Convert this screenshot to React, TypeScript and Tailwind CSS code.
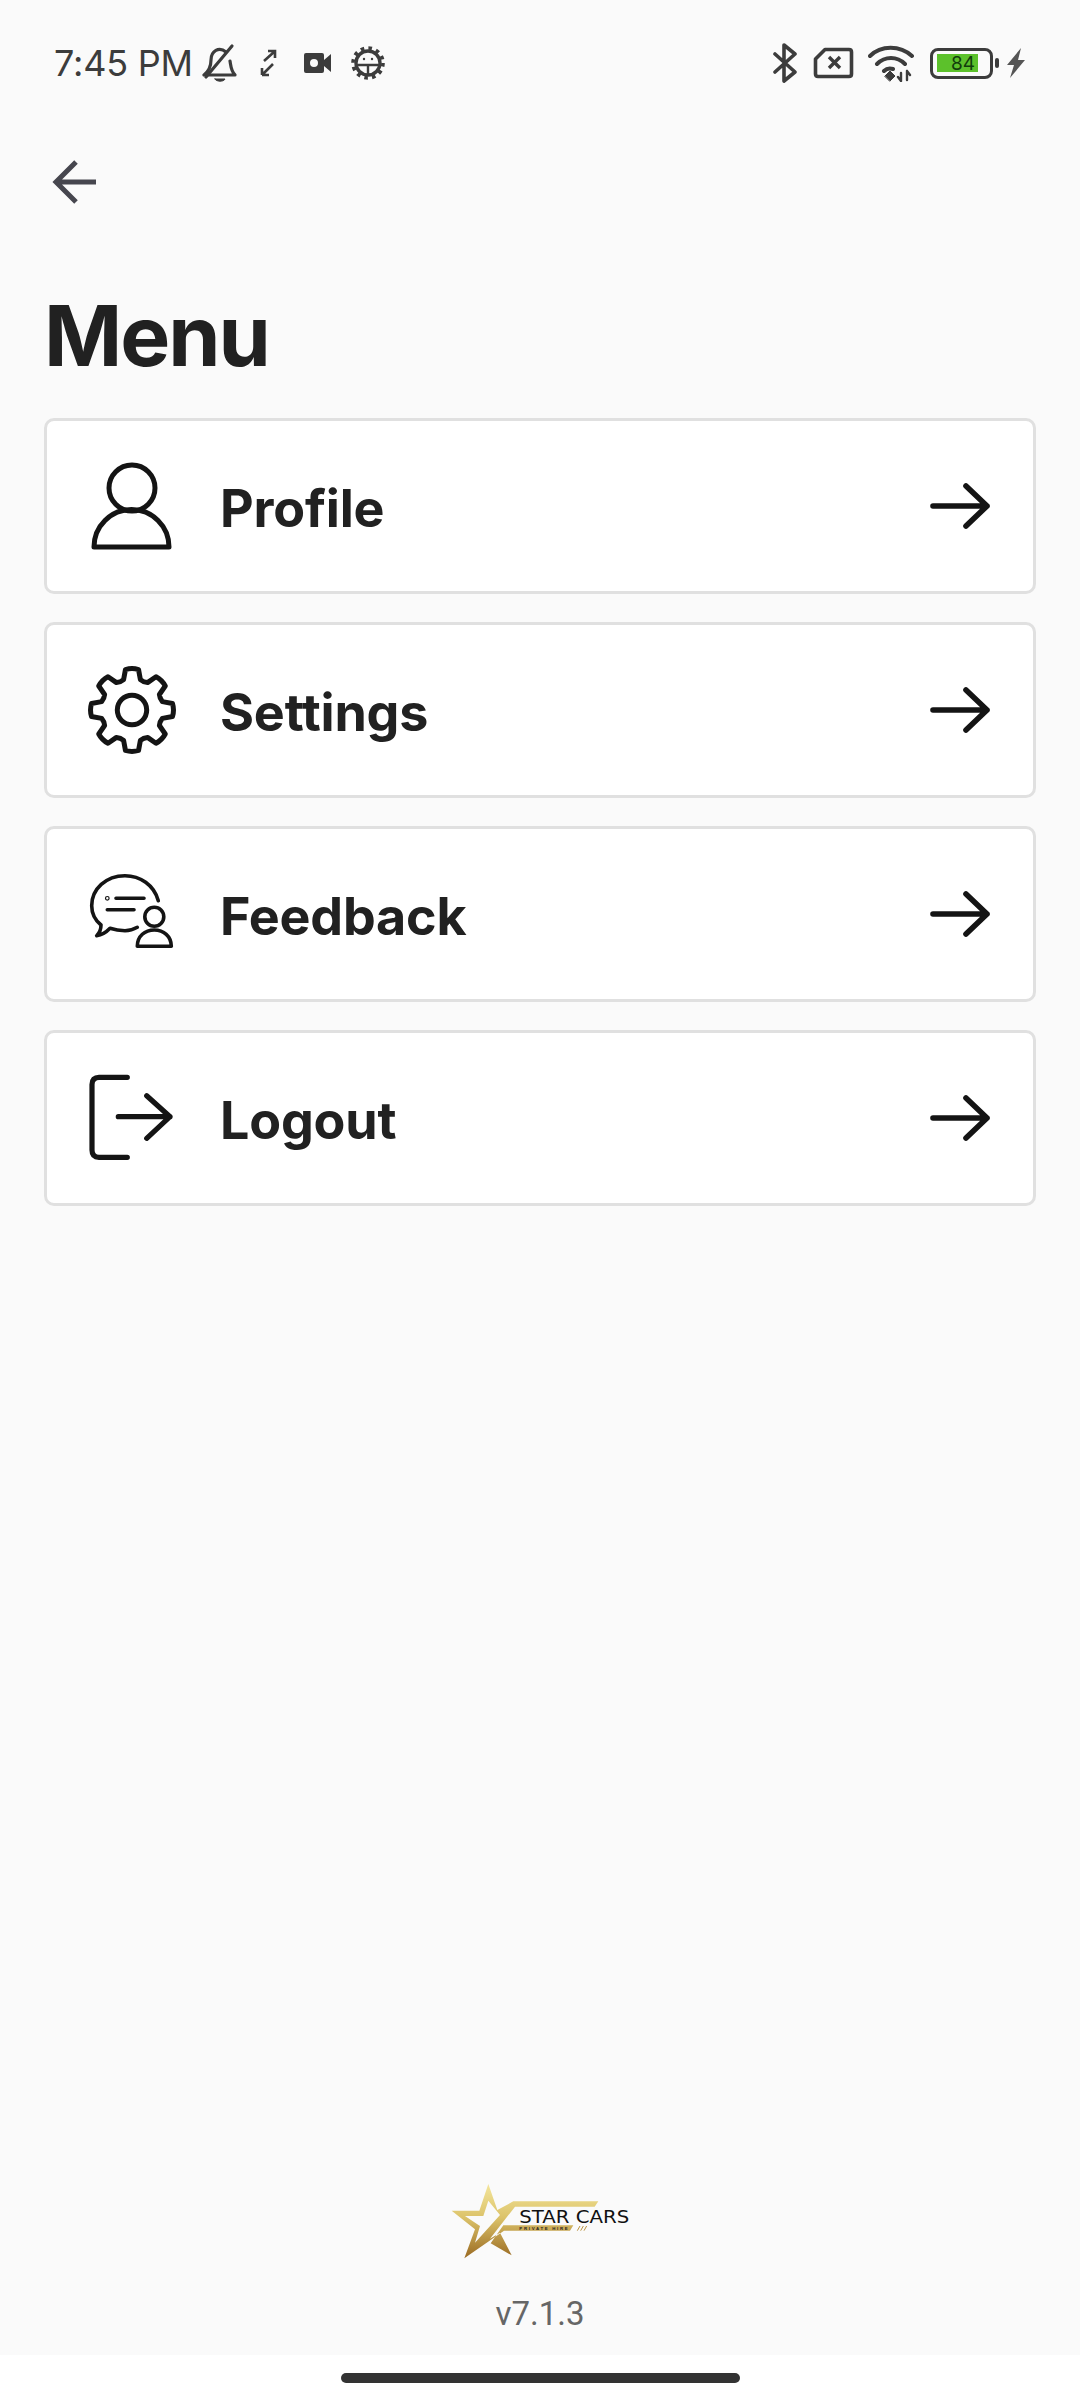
import { ReactNode } from 'react';

// 8-tooth gear outline, centred on 44,44 in an 88 box
const gearPath = () => {
    const pt = (r: number, a: number) => `${(44 + r * Math.sin(a)).toFixed(2)} ${(44 - r * Math.cos(a)).toFixed(2)}`;
    let d = '';
    for (let i = 0; i < 8; i++) {
        const a = (i * Math.PI) / 4;
        const next = a + Math.PI / 4;
        d += `${i === 0 ? 'M' : 'L'}${pt(31.5, a - 0.27)} L${pt(41, a - 0.16)} Q${pt(42.5, a)} ${pt(41, a + 0.16)} L${pt(31.5, a + 0.27)} Q${pt(30, a + Math.PI / 8)} ${pt(31.5, next - 0.27)} `;
    }
    return d + 'Z';
};

const ProfileIcon = () => (
    <svg width="88" height="88" viewBox="0 0 88 88" fill="none" stroke="#141414" strokeWidth="5" strokeLinejoin="round">
        <circle cx="44" cy="26" r="23" />
        <path d="M6 85 A37.5 37.5 0 0 1 81 85 Z" />
    </svg>
);

const SettingsIcon = () => (
    <svg width="88" height="88" viewBox="0 0 88 88" fill="none" stroke="#141414" strokeWidth="5" strokeLinejoin="round">
        <path d={gearPath()} />
        <circle cx="44" cy="44" r="14.7" />
    </svg>
);

const FeedbackIcon = () => (
    <svg width="88" height="88" viewBox="0 0 88 88" fill="none" stroke="#141414" strokeWidth="3.6" strokeLinecap="round" strokeLinejoin="round">
        <path d="M70.3 30.7 C66 15 52 5.7 37 5.7 C18 5.7 3.7 19 3.7 35.7 C3.7 44 7 50 13 55 C13 59 11.5 63 8.7 65.7 C14 65 18.5 62 22 58.3 C27 60 32 60.7 37 60.7 C41 60.7 45.5 59.5 49.3 57.3" />
        <path d="M28 28.3 H56 M19.3 39.7 H46" />
        <circle cx="19.3" cy="28.3" r="0.6" />
        <circle cx="66.3" cy="46.7" r="9.5" />
        <path d="M49.3 76.3 C49.3 66 57 60 66.3 60 C75.5 60 83.3 66 83.3 76.3 Z" />
    </svg>
);

const LogoutIcon = () => (
    <svg width="88" height="88" viewBox="0 0 88 88" fill="none" stroke="#141414" strokeWidth="5.2" strokeLinecap="round" strokeLinejoin="round">
        <path d="M39.3 3.3 H11 Q4 3.3 4 10.5 V76 Q4 83.3 11 83.3 H39.3" />
        <path d="M30.3 42.7 H82 M58.7 21.7 L82 42.7 L58.7 64.3" />
    </svg>
);

const ForwardArrow = () => (
    <svg width="60" height="48" viewBox="0 0 60 48" fill="none" stroke="#141414" strokeWidth="5.6" strokeLinecap="round" strokeLinejoin="round">
        <path d="M3 24 H57 M36 4 L57 24 L36 44" />
    </svg>
);

const StarCarsLogo = () => (
    <svg width="240" height="130" viewBox="0 0 720 390">
        <defs>
            <linearGradient id="gold" x1="0" y1="0" x2="0" y2="1">
                <stop offset="0" stopColor="#f3e59b" />
                <stop offset="0.45" stopColor="#dcc36a" />
                <stop offset="1" stopColor="#9a6a22" />
            </linearGradient>
        </defs>
        <path
            fill="url(#gold)"
            fillRule="evenodd"
            d="M205 72 L232 150 L280 124 H535 L524 140 H285 L210 236 L240 218 L275 286 L212 250 L250 196 H460 L450 212 H252 L133 295 L165 208 L95 152 H178 Z M205 122 L190 168 H135 L180 198 L165 248 L240 165 Z"
        />
        <text x="298" y="190" fontFamily="'DejaVu Sans', sans-serif" fontSize="52" fill="#111" textLength="330" lengthAdjust="spacingAndGlyphs">
            STAR CARS
        </text>
        <text x="298" y="210" fontFamily="'Liberation Sans', sans-serif" fontSize="13" fontWeight="700" fill="#222" textLength="145" lengthAdjust="spacing">
            PRIVATE HIRE
        </text>
        <path d="M472 212 L480 198 M482 212 L490 198 M492 212 L500 198" stroke="#b8923f" strokeWidth="3" />
    </svg>
);

const StatusLeft = () => (
    <div className="flex items-center">
        <span className="text-[36px] leading-none text-[#3c3c3c] tracking-[-0.2px]">7:45 PM</span>
        <svg className="ml-[9px]" width="36" height="40" viewBox="0 0 36 40" fill="none" stroke="#3c3c3c" strokeWidth="3.2" strokeLinecap="round" strokeLinejoin="round">
            <path d="M2 32 H33 C29 28 29 24 28 18 M24 9 C17 3 9 8 9 17 C9 24 7 28 2 32" />
            <path d="M4 34 L30 3" />
            <path d="M13 36 H23 C22 39 14 39 13 36 Z" fill="#3c3c3c" strokeWidth="1" />
        </svg>
        <svg className="ml-[21px]" width="18" height="28" viewBox="0 0 18 28" fill="none" stroke="#3c3c3c" strokeWidth="2.6">
            <path d="M9 2 H16 V9 M15 3 L5 12 M3 26 V19 M3 26 H10 M4 25 L14 15" />
        </svg>
        <svg className="ml-[27px]" width="28" height="20" viewBox="0 0 28 20">
            <path fillRule="evenodd" fill="#3c3c3c" d="M2 0 H18 Q20 0 20 2 V7 L27 1 V19 L20 13 V18 Q20 20 18 20 H2 Q0 20 0 18 V2 Q0 0 2 0 Z M10 6 A4 4 0 1 0 10 14 A4 4 0 1 0 10 6 Z" />
        </svg>
        <svg className="ml-[19px]" width="34" height="34" viewBox="0 0 34 34" fill="none" stroke="#3c3c3c">
            <circle cx="17" cy="17" r="12" strokeWidth="3.4" />
            <circle cx="17" cy="17" r="15" strokeWidth="3.6" strokeDasharray="3.6 4.25" />
            <path d="M7 19 H27 M17 19 V28" strokeWidth="2.4" />
            <circle cx="13" cy="13" r="1.2" fill="#3c3c3c" strokeWidth="0" />
            <circle cx="21" cy="13" r="1.2" fill="#3c3c3c" strokeWidth="0" />
        </svg>
    </div>
);

const StatusRight = () => (
    <div className="flex items-center">
        <svg width="26" height="40" viewBox="0 0 26 40" fill="none" stroke="#3c3c3c" strokeWidth="3.6" strokeLinecap="round" strokeLinejoin="round">
            <path d="M3 11 L23 29 L12 38 V2 L23 11 L3 29" />
        </svg>
        <svg className="ml-[15px]" width="41" height="32" viewBox="0 0 41 32" fill="none" stroke="#3c3c3c" strokeLinejoin="round">
            <path d="M12 2.5 H36 Q38.5 2.5 38.5 5 V27 Q38.5 29.5 36 29.5 H5 Q2.5 29.5 2.5 27 V12 Z" strokeWidth="3.6" />
            <path d="M16 10 L27 21 M27 10 L16 21" strokeWidth="3.4" />
        </svg>
        <svg className="ml-[14px]" width="47" height="37" viewBox="0 0 47 37" fill="none" stroke="#3c3c3c" strokeWidth="4" strokeLinecap="round">
            <path d="M2 11 C13 0 32 0 44 11 M9 19 C17 11 29 11 37 19 M16 26 C19 23 22 23 25 24" />
            <path d="M17 31 L22 26 L27 31 L22 36 Z" fill="#3c3c3c" strokeWidth="1" />
            <path d="M33 28 V36 M30 32 L33 36 M39 26 V35 M39 26 L42 30" strokeWidth="2.4" />
        </svg>
        <div className="ml-[15px] flex items-center">
            <div className="w-[63px] h-[31px] rounded-[8px] border-[3.5px] border-[#3c3c3c] flex items-center pl-[4px]">
                <div className="w-[41px] h-[18px] bg-[#5cc12b] flex items-center justify-end pr-[3px]">
                    <span className="text-[19px] leading-none text-[#123d0c]">84</span>
                </div>
            </div>
            <div className="ml-[2px] w-[4px] h-[10px] rounded-[2px] bg-[#3c3c3c]" />
        </div>
        <svg className="ml-[7px]" width="20" height="30" viewBox="0 0 20 30">
            <path fill="#555555" d="M15 0 L1 17 H8 L4 30 L19 12 H12 Z" />
        </svg>
    </div>
);

const MenuRow = ({ icon, label }: { icon: ReactNode; label: string }) => (
    <div className="h-[176px] bg-white border-[3px] border-[#e0e0e0] rounded-[10px] pl-[41px] pr-[43px] flex items-center">
        <div className="w-[88px] h-[88px] shrink-0">{icon}</div>
        <span className="ml-[44px] flex-1 text-[52px] leading-none font-bold text-[#212121] tracking-[-0.2px] pt-[6px]">{label}</span>
        <ForwardArrow />
    </div>
);

export default function App() {
    const items = [
        { label: 'Profile', icon: <ProfileIcon /> },
        { label: 'Settings', icon: <SettingsIcon /> },
        { label: 'Feedback', icon: <FeedbackIcon /> },
        { label: 'Logout', icon: <LogoutIcon /> },
    ];

    return (
        <div className="w-[1080px] h-[2400px] flex flex-col bg-white font-['Inter',sans-serif]">
            <div className="h-[2355px] bg-[#fafafa] flex flex-col">
                {/* status bar */}
                <div className="h-[126px] pl-[54px] pr-[54px] flex items-center justify-between">
                    <StatusLeft />
                    <StatusRight />
                </div>

                <div className="pl-[52px] mt-[34px] h-[44px]">
                    <svg width="44" height="44" viewBox="0 0 44 44" fill="none" stroke="#46464e" strokeWidth="5" strokeLinejoin="miter">
                        <path d="M44 22 H4 M24 2 L4 22 L24 42" />
                    </svg>
                </div>

                <h1 className="mt-[86px] pl-[44px] text-[84px] leading-[92px] font-bold text-[#212121] tracking-[-2px]">Menu</h1>

                <div className="mt-[36px] mx-[44px] flex flex-col gap-[28px]">
                    {items.map((item) => (
                        <MenuRow key={item.label} icon={item.icon} label={item.label} />
                    ))}
                </div>

                <div className="mt-auto flex flex-col items-center">
                    <StarCarsLogo />
                    <span className="mt-[5px] mb-[22px] text-[33px] leading-[38px] text-[#666666] font-['Roboto',sans-serif]">v7.1.3</span>
                </div>
            </div>

            <div className="flex-1 flex justify-center pt-[18px]">
                <div className="w-[399px] h-[10px] rounded-full bg-[#333333]" />
            </div>
        </div>
    );
}
